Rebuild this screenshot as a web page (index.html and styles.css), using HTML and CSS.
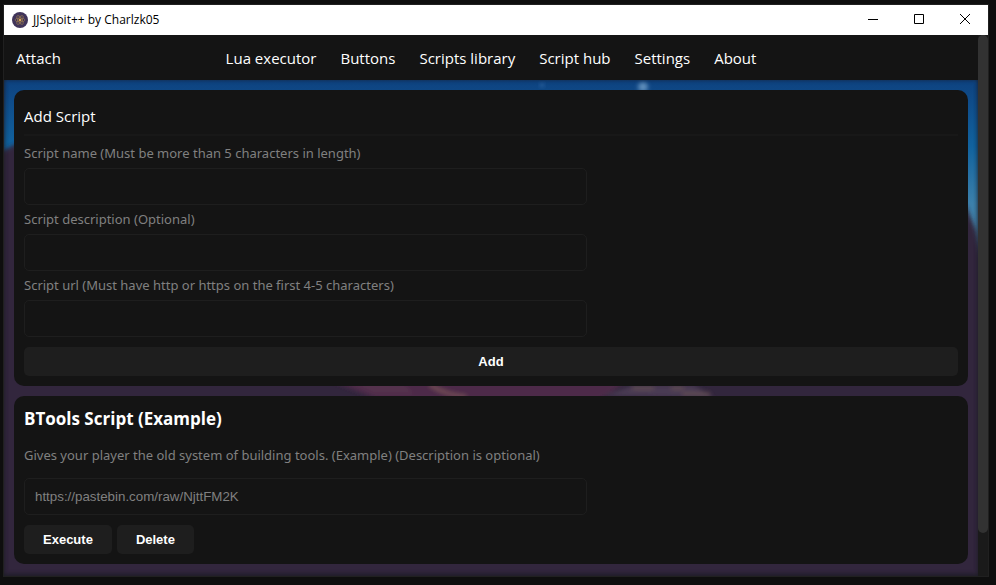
FILE: index.html
```html
<!DOCTYPE html>
<html lang="en">
<head>
<meta charset="utf-8">
<meta name="viewport" content="width=device-width, initial-scale=1">
<title>JJSploit++ by Charlzk05</title>
<link rel="stylesheet" href="styles.css">
</head>
<body>
<div class="window">
  <header class="titlebar">
    <svg class="app-icon" viewBox="0 0 16 16" aria-hidden="true">
      <circle cx="8" cy="8" r="8" fill="#40345a"/>
      <g fill="none" stroke="#94764f" stroke-width="0.7">
        <ellipse cx="8" cy="8" rx="5" ry="2"/>
        <ellipse cx="8" cy="8" rx="5" ry="2" transform="rotate(60 8 8)"/>
        <ellipse cx="8" cy="8" rx="5" ry="2" transform="rotate(120 8 8)"/>
      </g>
      <circle cx="8" cy="8" r="1.2" fill="#e0ac55"/>
    </svg>
    <span class="app-title">JJSploit++ by Charlzk05</span>
    <div class="window-controls">
      <button type="button" aria-label="Minimize"><svg viewBox="0 0 10 10"><path d="M0 5.5H10"/></svg></button>
      <button type="button" aria-label="Maximize"><svg viewBox="0 0 10 10"><path d="M.5 .5H9.5V9.5H.5Z"/></svg></button>
      <button type="button" aria-label="Close"><svg viewBox="0 0 10 10"><path d="M0 0L10 10M10 0L0 10"/></svg></button>
    </div>
  </header>
  <div class="viewport">
    <div class="page">
      <nav class="navbar">
        <a class="attach" href="#attach">Attach</a>
        <div class="links">
          <a href="#executor">Lua executor</a>
          <a href="#buttons">Buttons</a>
          <a href="#library">Scripts library</a>
          <a href="#hub">Script hub</a>
          <a href="#settings">Settings</a>
          <a href="#about">About</a>
        </div>
      </nav>
      <main class="content">
        <svg class="backdrop" viewBox="0 0 974 496" preserveAspectRatio="none" aria-hidden="true">
          <defs>
            <linearGradient id="sky" x1="0" y1="0" x2="0" y2="1">
              <stop offset="0" stop-color="#0e4280"/>
              <stop offset="0.35" stop-color="#11629e"/>
              <stop offset="0.65" stop-color="#3c80ab"/>
              <stop offset="1" stop-color="#517f9c"/>
            </linearGradient>
            <filter id="soft" x="-20%" y="-20%" width="140%" height="140%"><feGaussianBlur stdDeviation="2"/></filter>
            <filter id="haze" x="-50%" y="-50%" width="200%" height="200%"><feGaussianBlur stdDeviation="2"/></filter>
          </defs>
          <rect width="974" height="190" fill="url(#sky)"/>
          <path d="M-20 72L0 70L12 64L500 40L962 126L972 150L978 180L984 520H-20Z" fill="#30263c" filter="url(#soft)"/>
          <circle cx="639" cy="7" r="5" fill="#5d8cba" filter="url(#haze)"/>
          <circle cx="538" cy="5" r="2" fill="#356ca8" filter="url(#haze)"/>
          <g filter="url(#haze)">
            <path d="M325 300L625 300L595 320H375Z" fill="#4d2c4a"/>
            <path d="M346 303L400 304L410 314H370Z" fill="#55304e"/>
            <path d="M426 305Q442 315 462 317" fill="none" stroke="#7a5358" stroke-width="3"/>
            <path d="M600 316L630 305L690 305L710 318Z" fill="#493a52"/>
            <path d="M628 308H650M667 308L680 308M678 314H706" fill="none" stroke="#655052" stroke-width="3"/>
          </g>
        </svg>
        <form class="card add-script">
          <h1>Add Script</h1>
          <label for="name">Script name (Must be more than 5 characters in length)</label>
          <input id="name" type="text">
          <label for="description">Script description (Optional)</label>
          <input id="description" type="text">
          <label for="url">Script url (Must have http or https on the first 4-5 characters)</label>
          <input id="url" type="text">
          <button class="add" type="button">Add</button>
        </form>
        <section class="card script">
          <h2>BTools Script (Example)</h2>
          <p>Gives your player the old system of building tools. (Example) (Description is optional)</p>
          <input type="text" aria-label="Script url" value="https://pastebin.com/raw/NjttFM2K" readonly>
          <div class="actions">
            <button type="button">Execute</button>
            <button type="button">Delete</button>
          </div>
        </section>
      </main>
    </div>
    <div class="scrollbar" aria-hidden="true"><div class="thumb"></div></div>
  </div>
</div>
</body>
</html>
```
FILE: styles.css
```css
* {
  box-sizing: border-box;
}

body {
  margin: 0;
  min-height: 100vh;
  display: flex;
  padding: 5px 8px 9px 4px;
  background: #0e0e0e;
  color: #fff;
  font: 15px/24px "Open Sans", "Noto Sans", sans-serif;
}

.window {
  flex: 1;
  display: flex;
  flex-direction: column;
  outline: 1px solid #202020;
}

.titlebar {
  display: flex;
  align-items: center;
  height: 30px;
  padding-left: 8px;
  gap: 5px;
  background: #fff;
  color: #000;
  font-size: 12px;
}

.app-icon {
  width: 16px;
  height: 16px;
}

.window-controls {
  display: flex;
  margin-left: auto;
  height: 100%;
}

.window-controls button {
  display: flex;
  align-items: center;
  justify-content: center;
  width: 46px;
  padding: 0 0 2px;
  border: 0;
  background: none;
}

.window-controls svg {
  width: 10px;
  height: 10px;
  overflow: visible;
  fill: none;
  stroke: #000;
}

.viewport {
  flex: 1;
  display: flex;
}

.page {
  flex: 1;
  display: flex;
  flex-direction: column;
}

.navbar {
  display: grid;
  grid-template-columns: 1fr auto 1fr;
  align-items: center;
  height: 45px;
  padding: 0 12px;
  background: #141414;
}

.navbar a {
  color: #fff;
  text-decoration: none;
}

.attach {
  justify-self: start;
}

.links {
  display: flex;
  gap: 24px;
}

.content {
  flex: 1;
  display: flex;
  flex-direction: column;
  gap: 10px;
  padding: 10px 10px 12px;
  position: relative;
  isolation: isolate;
  background: #30263c;
}

.content::after {
  content: "";
  position: absolute;
  inset: 0;
  z-index: -1;
  box-shadow: inset 0 -2px 5px -1px #1c1c24, inset 0 0 4px #1c1c2480;
  clip-path: inset(0);
}

.backdrop {
  position: absolute;
  inset: 0;
  width: 100%;
  height: 100%;
  z-index: -1;
}

.card {
  padding: 10px;
  border-radius: 10px;
  background: #141414;
}

h1 {
  margin: 0 0 8px;
  padding: 4px 0 6px;
  border-bottom: 2px solid #181818;
  font-size: 15px;
  font-weight: 400;
}

h2 {
  margin: 0 0 13px;
  font-size: 17px;
  line-height: 26px;
  font-weight: 700;
}

label,
p {
  display: block;
  color: #808080;
  font-family: "Noto Sans", "Open Sans", sans-serif;
  font-size: 13px;
}

label {
  margin: 5px 0;
  line-height: 19px;
}

p {
  margin: 0 0 13px;
  line-height: 20px;
}

input {
  display: block;
  width: calc(60% + 3px);
  height: 37px;
  padding: 0 10px;
  border: 1px solid #1e1e1e;
  border-radius: 5px;
  background: #141414;
  color: #808080;
  font-family: "Liberation Sans", Arial, sans-serif;
}

.card button {
  height: 29px;
  padding: 0 19px;
  border: 0;
  border-radius: 5px;
  background: #1e1e1e;
  color: #fff;
  font: 700 13px "Liberation Sans", Arial, sans-serif;
}

.card .add {
  display: block;
  width: 100%;
  margin-top: 10px;
}

.actions {
  display: flex;
  gap: 5px;
  margin-top: 10px;
}

.scrollbar {
  width: 10px;
  background: #1a1a1a;
}

.thumb {
  height: 92%;
  border-radius: 5px;
  background: #323232;
}
```
